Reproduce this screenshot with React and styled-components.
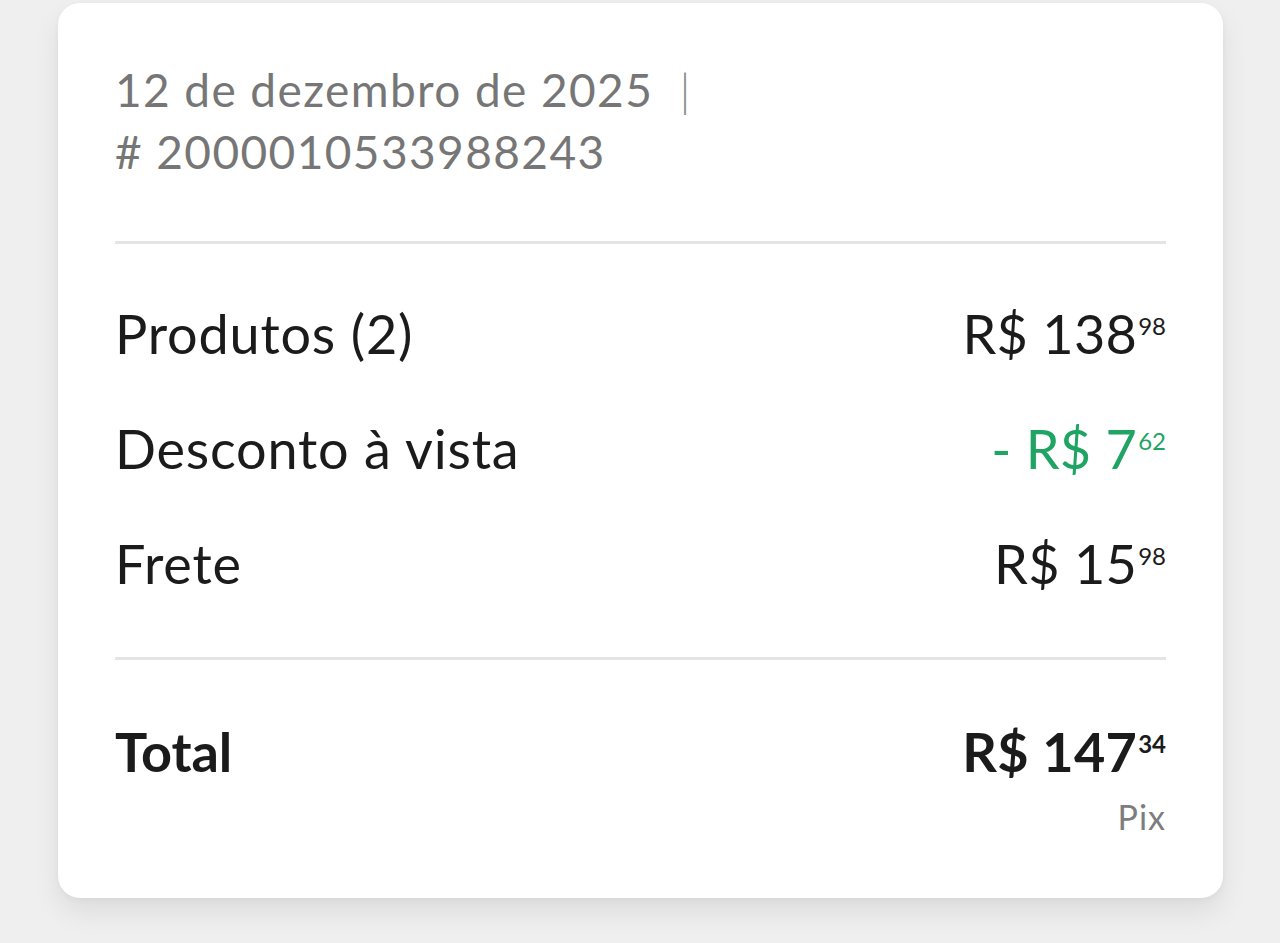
import React from "react";
import styled, { createGlobalStyle } from "styled-components";

const Global = createGlobalStyle`
  html, body { margin: 0; padding: 0; background: #efefef; }
  body { font-family: Lato, "Open Sans", sans-serif; -webkit-font-smoothing: antialiased; }
`;

const Page = styled.div`
  padding: 3px 57px 0 58px;
  height: 943px;
  box-sizing: border-box;
  overflow: hidden;
`;

const Card = styled.div`
  background: #fff;
  border-radius: 22px;
  padding: 56px 57px 59px 57px;
  box-shadow: 0 14px 28px rgba(0, 0, 0, 0.08), 0 2px 6px rgba(0, 0, 0, 0.04);
`;

const Meta = styled.div`
  font-size: 46px;
  line-height: 62px;
  color: #767676;
  letter-spacing: 1.4px;
`;

const Pipe = styled.span`
  color: #8a8a8a;
  font-weight: 300;
`;

const Divider = styled.hr`
  border: 0;
  height: 3px;
  background: #e4e4e4;
  margin: ${(p) => p.$top}px 0 ${(p) => p.$bottom}px;
`;

const Rows = styled.div`
  display: flex;
  flex-direction: column;
  gap: 51px;
`;

const Row = styled.div`
  display: flex;
  justify-content: space-between;
  align-items: baseline;
  font-size: 54px;
  line-height: 64px;
  color: #1b1b1b;
  letter-spacing: ${(p) => (p.$bold ? "0" : "0.8px")};
  font-weight: ${(p) => (p.$bold ? 700 : 400)};
`;

const Amount = styled.span`
  color: ${(p) => p.$color || "#1b1b1b"};
  white-space: nowrap;
  letter-spacing: 0.3px;
`;

const Cents = styled.span`
  font-size: 24px;
  line-height: 0;
  letter-spacing: 0;
  vertical-align: 19px;
  margin-left: 1px;
`;

const Method = styled.div`
  margin-top: 11px;
  text-align: right;
  font-size: 34px;
  line-height: 44px;
  letter-spacing: 1px;
  color: #7d7d7d;
`;

const Price = ({ value, cents, color, prefix }) => (
  <Amount $color={color}>
    {prefix}R$ {value}
    <Cents>{cents}</Cents>
  </Amount>
);

export default function App() {
  return (
    <Page>
      <Global />
      <Card>
        <Meta>
          12 de dezembro de 2025 &nbsp;<Pipe>|</Pipe>
          <br /># 2000010533988243
        </Meta>
        <Divider $top={58} $bottom={58} />
        <Rows>
          <Row>
            <span>Produtos (2)</span>
            <Price value="138" cents="98" />
          </Row>
          <Row>
            <span>Desconto à vista</span>
            <Price prefix="- " value="7" cents="62" color="#1fa463" />
          </Row>
          <Row>
            <span>Frete</span>
            <Price value="15" cents="98" />
          </Row>
        </Rows>
        <Divider $top={61} $bottom={60} />
        <Row $bold>
          <span>Total</span>
          <Price value="147" cents="34" />
        </Row>
        <Method>Pix</Method>
      </Card>
    </Page>
  );
}
